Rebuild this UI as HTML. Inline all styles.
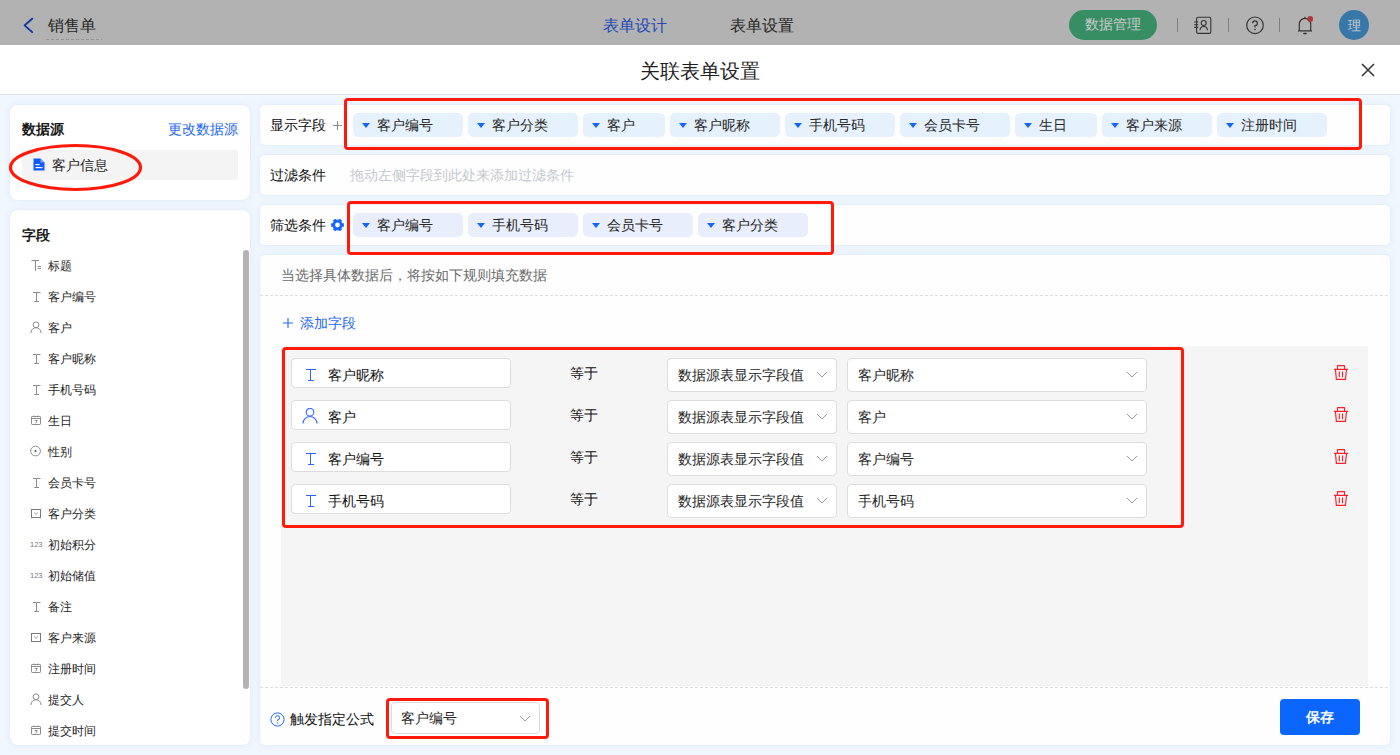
<!DOCTYPE html>
<html><head><meta charset="utf-8">
<style>
*{box-sizing:border-box;margin:0;padding:0}
html,body{width:1400px;height:755px;overflow:hidden}
body{position:relative;background:#f1f7fe;font-family:"Liberation Sans",sans-serif;font-size:14px;color:#262626}
.a{position:absolute}
.t{position:absolute;white-space:nowrap;line-height:20px}
#hdr{left:0;top:0;width:1400px;height:45px;background:#fff}
#ov{left:0;top:0;width:1400px;height:45px;background:rgba(0,0,0,.3)}
#mh{left:0;top:45px;width:1400px;height:50px;background:#fff;border-bottom:1px solid #e3e3e3}
.card{position:absolute;background:#fff;border-radius:8px;box-shadow:0 0 6px rgba(205,225,250,.7)}
.rc{position:absolute;background:#fefefe;border-radius:5px;box-shadow:0 0 6px rgba(205,225,250,.7)}
.tag{position:absolute;top:8px;height:24px;background:#e5f2fd;border-radius:5px}
.tag i{position:absolute;left:9px;top:10px;width:0;height:0;border-left:4.5px solid transparent;border-right:4.5px solid transparent;border-top:5px solid #1366ff}
.tag span{position:absolute;left:24px;top:2px;line-height:20px;color:#262626;white-space:nowrap}
.ftag{background:#e8eefb}
.red{position:absolute;border:3px solid #ff1a0a;border-radius:4px}
.fi{position:absolute;left:22px;width:200px;height:20px}
.fi svg{position:absolute;left:8px;top:3px}
.fi span{position:absolute;left:26px;top:0;font-size:12px;line-height:20px;color:#262626}
.inp{position:absolute;left:10px;width:220px;height:30px;background:#fff;border:1px solid #dcdcdc;border-radius:4px}
.sel{position:absolute;height:34px;background:#fff;border:1px solid #dcdcdc;border-radius:4px}
</style></head><body>

<!-- top header -->
<div id="hdr" class="a">
  <svg class="a" style="left:21px;top:16px" width="14" height="18" viewBox="0 0 14 18"><path d="M11.2 2.7 L3.6 9.4 L11.2 16.1" fill="none" stroke="#1450f0" stroke-width="1.9" stroke-linecap="round" stroke-linejoin="round"/></svg>
  <div class="t" style="left:48px;top:15px;font-size:16px;line-height:22px;color:#363636">销售单</div>
  <div class="a" style="left:46px;top:39px;width:56px;height:1px;background:repeating-linear-gradient(90deg,#d5d5d5 0 3px,transparent 3px 5px)"></div>
  <div class="t" style="left:603px;top:15px;font-size:16px;line-height:22px;color:#2f6bff">表单设计</div>
  <div class="t" style="left:730px;top:15px;font-size:16px;line-height:22px;color:#363636">表单设置</div>
  <div class="a" style="left:1069px;top:10px;width:88px;height:30px;border-radius:15px;background:#4fcc8d"></div>
  
  <div class="a" style="left:1177px;top:18px;width:1px;height:14px;background:#b5b5b5"></div>
  <svg class="a" style="left:1193px;top:16px" width="19" height="19" viewBox="0 0 19 19"><rect x="3.6" y="1.2" width="14.2" height="16.2" rx="1.3" fill="none" stroke="#4a4a4a" stroke-width="1.1"/><path d="M1.2 6H5.2M1.2 8.7H5.2M1.2 11.4H5.2" stroke="#4a4a4a" stroke-width="1.1"/><circle cx="10.7" cy="7" r="2.5" fill="none" stroke="#4a4a4a" stroke-width="1.1"/><path d="M6.9 14.3 A3.9 4.6 0 0 1 14.6 14.3" fill="none" stroke="#4a4a4a" stroke-width="1.1"/></svg>
  <div class="a" style="left:1228px;top:18px;width:1px;height:14px;background:#b5b5b5"></div>
  <svg class="a" style="left:1245px;top:16px" width="20" height="19" viewBox="0 0 20 19"><circle cx="10" cy="9.3" r="8.3" fill="none" stroke="#4a4a4a" stroke-width="1.15"/><path d="M7.6 7.2 A2.4 2.4 0 1 1 10 9.6 V11.4" fill="none" stroke="#4a4a4a" stroke-width="1.15"/><circle cx="10" cy="13.6" r="0.8" fill="#4a4a4a"/></svg>
  <div class="a" style="left:1279px;top:18px;width:1px;height:14px;background:#b5b5b5"></div>
  <svg class="a" style="left:1296px;top:15px" width="20" height="21" viewBox="0 0 20 21"><path d="M2 15.9 H16 M3.3 15.9 V9 A5.7 5.7 0 0 1 14.7 9 V15.9" fill="none" stroke="#4a4a4a" stroke-width="1.15"/><path d="M7.8 18.5 H10.2" stroke="#4a4a4a" stroke-width="1.3" stroke-linecap="round"/><path d="M9 1.8 V3.2" stroke="#4a4a4a" stroke-width="1.2"/><circle cx="14.1" cy="4" r="3" fill="#f55454"/></svg>
  <div class="a" style="left:1339px;top:10px;width:30px;height:30px;border-radius:50%;background:#50acf2"></div>
</div>
<div id="ov" class="a"></div>
<div class="t" style="left:1085px;top:14px;color:#cbcbcb">数据管理</div>
<div class="t" style="left:1348px;top:16px;font-size:13px;color:#d0d0d0">理</div>


<!-- modal header -->
<div id="mh" class="a">
  <div class="t" style="left:640px;top:13px;font-size:20px;line-height:26px;color:#1f1f1f">关联表单设置</div>
  <svg class="a" style="left:1361px;top:18px" width="14" height="14" viewBox="0 0 14 14"><path d="M1 1L13 13M13 1L1 13" stroke="#333" stroke-width="1.5"/></svg>
</div>

<!-- left card 1 -->
<div class="card" style="left:10px;top:105px;width:240px;height:95px"></div>
<!-- left card 2 -->
<div class="card" style="left:10px;top:210px;width:240px;height:535px"></div>

<!-- right cards -->
<div class="rc" style="left:260px;top:105px;width:1130px;height:40px"></div>
<div class="rc" style="left:260px;top:155px;width:1130px;height:40px"></div>
<div class="rc" style="left:260px;top:205px;width:1130px;height:40px"></div>
<div class="rc" style="left:260px;top:255px;width:1130px;height:490px"></div>


<div class="t" style="left:22px;top:119px;font-weight:bold;color:#1a1a1a">数据源</div>
<div class="t" style="left:168px;top:119px;color:#2468f2">更改数据源</div>
<div class="a" style="left:22px;top:150px;width:216px;height:30px;background:#f4f4f4;border-radius:2px"></div>
<svg class="a" style="left:33px;top:158px" width="12" height="13" viewBox="0 0 12 13"><path d="M0.5 0.5 H7.5 L11.5 4.5 V12.5 H0.5 Z" fill="#0f5bff"/><path d="M7.5 0.5 V4.5 H11.5" fill="#7aa6ff"/><rect x="2.5" y="6" width="4" height="1.2" fill="#fff"/><rect x="2.5" y="9" width="7" height="1.2" fill="#fff"/></svg>
<div class="t" style="left:52px;top:155px;color:#262626">客户信息</div>
<svg class="a" style="left:8px;top:143px" width="136" height="50" viewBox="0 0 136 50"><ellipse cx="67.5" cy="24.5" rx="65" ry="22" fill="none" stroke="#ff1a0a" stroke-width="3.2"/></svg>
<div class="t" style="left:22px;top:225px;font-weight:bold;color:#1a1a1a">字段</div>
<div class="a" style="left:243px;top:250px;width:6px;height:439px;background:#b4b4b4;border-radius:3px"></div>
<div class="fi" style="top:255.5px"><svg style="position:absolute;left:8px;top:3.5px" width="12" height="13" viewBox="0 0 12 13"><path d="M1.5 1.5H9M5.5 1.5V12M7.5 7.5H11M7.5 9.5H11" stroke="#8c8c8c" stroke-width="1" fill="none"/></svg><span>标题</span></div>
<div class="fi" style="top:286.5px"><svg style="position:absolute;left:8px;top:3.5px" width="12" height="13" viewBox="0 0 12 13"><path d="M3 2.5H10.5M6.5 2.5V11.5M4.2 11.5H9" stroke="#8c8c8c" stroke-width="1" fill="none"/></svg><span>客户编号</span></div>
<div class="fi" style="top:317.5px"><svg style="position:absolute;left:8px;top:3.5px" width="12" height="13" viewBox="0 0 12 13"><circle cx="6" cy="3.8" r="2.9" stroke="#8c8c8c" stroke-width="1" fill="none"/><path d="M0.9 12 A5.1 5.3 0 0 1 11.1 12" stroke="#8c8c8c" stroke-width="1" fill="none"/></svg><span>客户</span></div>
<div class="fi" style="top:348.5px"><svg style="position:absolute;left:8px;top:3.5px" width="12" height="13" viewBox="0 0 12 13"><path d="M3 2.5H10.5M6.5 2.5V11.5M4.2 11.5H9" stroke="#8c8c8c" stroke-width="1" fill="none"/></svg><span>客户昵称</span></div>
<div class="fi" style="top:379.5px"><svg style="position:absolute;left:8px;top:3.5px" width="12" height="13" viewBox="0 0 12 13"><path d="M3 2.5H10.5M6.5 2.5V11.5M4.2 11.5H9" stroke="#8c8c8c" stroke-width="1" fill="none"/></svg><span>手机号码</span></div>
<div class="fi" style="top:410.5px"><svg style="position:absolute;left:8px;top:3.5px" width="12" height="13" viewBox="0 0 12 13"><rect x="1.5" y="2.5" width="9" height="8" rx="0.7" stroke="#8c8c8c" stroke-width="1" fill="none"/><path d="M1.5 4.5H10.5M4.6 6.5H7.2L5.7 9.3M4 1.5V3M8 1.5V3" stroke="#8c8c8c" stroke-width="1" fill="none"/></svg><span>生日</span></div>
<div class="fi" style="top:441.5px"><svg style="position:absolute;left:8px;top:3.5px" width="12" height="13" viewBox="0 0 12 13"><circle cx="5.5" cy="6" r="4.9" stroke="#8c8c8c" stroke-width="1" fill="none"/><circle cx="5.5" cy="6" r="1.1" fill="#555"/></svg><span>性别</span></div>
<div class="fi" style="top:472.5px"><svg style="position:absolute;left:8px;top:3.5px" width="12" height="13" viewBox="0 0 12 13"><path d="M3 2.5H10.5M6.5 2.5V11.5M4.2 11.5H9" stroke="#8c8c8c" stroke-width="1" fill="none"/></svg><span>会员卡号</span></div>
<div class="fi" style="top:503.5px"><svg style="position:absolute;left:8px;top:3.5px" width="12" height="13" viewBox="0 0 12 13"><rect x="1.5" y="2.5" width="9" height="8" stroke="#7a7a7a" stroke-width="1" fill="none"/><path d="M4.2 5.6 L6 7.3 L7.8 5.6" stroke="#8c8c8c" stroke-width="0.9" fill="none"/></svg><span>客户分类</span></div>
<div class="fi" style="top:534.5px"><svg style="position:absolute;left:8px;top:3.5px" width="14" height="13" viewBox="0 0 14 13"><text x="0" y="9" font-size="7.5" fill="#777" font-family="Liberation Sans">123</text></svg><span>初始积分</span></div>
<div class="fi" style="top:565.5px"><svg style="position:absolute;left:8px;top:3.5px" width="14" height="13" viewBox="0 0 14 13"><text x="0" y="9" font-size="7.5" fill="#777" font-family="Liberation Sans">123</text></svg><span>初始储值</span></div>
<div class="fi" style="top:596.5px"><svg style="position:absolute;left:8px;top:3.5px" width="12" height="13" viewBox="0 0 12 13"><path d="M3 2.5H10.5M6.5 2.5V11.5M4.2 11.5H9" stroke="#8c8c8c" stroke-width="1" fill="none"/></svg><span>备注</span></div>
<div class="fi" style="top:627.5px"><svg style="position:absolute;left:8px;top:3.5px" width="12" height="13" viewBox="0 0 12 13"><rect x="1.5" y="2.5" width="9" height="8" stroke="#7a7a7a" stroke-width="1" fill="none"/><path d="M4.2 5.6 L6 7.3 L7.8 5.6" stroke="#8c8c8c" stroke-width="0.9" fill="none"/></svg><span>客户来源</span></div>
<div class="fi" style="top:658.5px"><svg style="position:absolute;left:8px;top:3.5px" width="12" height="13" viewBox="0 0 12 13"><rect x="1.5" y="2.5" width="9" height="8" rx="0.7" stroke="#8c8c8c" stroke-width="1" fill="none"/><path d="M1.5 4.5H10.5M4.6 6.5H7.2L5.7 9.3M4 1.5V3M8 1.5V3" stroke="#8c8c8c" stroke-width="1" fill="none"/></svg><span>注册时间</span></div>
<div class="fi" style="top:689.5px"><svg style="position:absolute;left:8px;top:3.5px" width="12" height="13" viewBox="0 0 12 13"><circle cx="6" cy="3.8" r="2.9" stroke="#8c8c8c" stroke-width="1" fill="none"/><path d="M0.9 12 A5.1 5.3 0 0 1 11.1 12" stroke="#8c8c8c" stroke-width="1" fill="none"/></svg><span>提交人</span></div>
<div class="fi" style="top:720.5px"><svg style="position:absolute;left:8px;top:3.5px" width="12" height="13" viewBox="0 0 12 13"><rect x="1.5" y="2.5" width="9" height="8" rx="0.7" stroke="#8c8c8c" stroke-width="1" fill="none"/><path d="M1.5 4.5H10.5M4.6 6.5H7.2L5.7 9.3M4 1.5V3M8 1.5V3" stroke="#8c8c8c" stroke-width="1" fill="none"/></svg><span>提交时间</span></div>

<div class="t" style="left:270px;top:115px;color:#0d0d0d">显示字段</div>
<svg class="a" style="left:333px;top:121px" width="9" height="9" viewBox="0 0 9 9"><path d="M4.5 0V9M0 4.5H9" stroke="#8a8a8a" stroke-width="1"/></svg>
<div class="tag" style="left:353px;top:113px;width:110px"><i></i><span>客户编号</span></div>
<div class="tag" style="left:468px;top:113px;width:110px"><i></i><span>客户分类</span></div>
<div class="tag" style="left:583px;top:113px;width:82px"><i></i><span>客户</span></div>
<div class="tag" style="left:670px;top:113px;width:110px"><i></i><span>客户昵称</span></div>
<div class="tag" style="left:785px;top:113px;width:110px"><i></i><span>手机号码</span></div>
<div class="tag" style="left:900px;top:113px;width:110px"><i></i><span>会员卡号</span></div>
<div class="tag" style="left:1015px;top:113px;width:82px"><i></i><span>生日</span></div>
<div class="tag" style="left:1102px;top:113px;width:110px"><i></i><span>客户来源</span></div>
<div class="tag" style="left:1217px;top:113px;width:110px"><i></i><span>注册时间</span></div>
<div class="red" style="left:344px;top:98px;width:1018px;height:52px"></div>
<div class="t" style="left:270px;top:165px;color:#0d0d0d">过滤条件</div>
<div class="t" style="left:350px;top:165px;color:#c4c8cf">拖动左侧字段到此处来添加过滤条件</div>
<div class="t" style="left:270px;top:215px;color:#0d0d0d">筛选条件</div>
<svg class="a" style="left:331px;top:219px" width="13" height="12" viewBox="0 0 13 12"><path d="M10.74 3.55 L11.19 4.57 L12.64 4.58 L12.64 7.42 L11.19 7.43 L10.74 8.45 L10.08 9.34 L10.80 10.61 L8.34 12.02 L7.60 10.77 L6.50 10.90 L5.40 10.77 L4.66 12.02 L2.20 10.61 L2.92 9.34 L2.26 8.45 L1.81 7.43 L0.36 7.42 L0.36 4.58 L1.81 4.57 L2.26 3.55 L2.92 2.66 L2.20 1.39 L4.66 -0.02 L5.40 1.23 L6.50 1.10 L7.60 1.23 L8.34 -0.02 L10.80 1.39 L10.08 2.66Z" fill="#1366ff" stroke="#1366ff" stroke-width="0.6" stroke-linejoin="round"/><circle cx="6.5" cy="6" r="2.4" fill="#fff"/></svg>
<div class="tag ftag" style="left:353px;top:213px;width:110px"><i></i><span>客户编号</span></div>
<div class="tag ftag" style="left:468px;top:213px;width:110px"><i></i><span>手机号码</span></div>
<div class="tag ftag" style="left:583px;top:213px;width:110px"><i></i><span>会员卡号</span></div>
<div class="tag ftag" style="left:698px;top:213px;width:110px"><i></i><span>客户分类</span></div>
<div class="red" style="left:347px;top:201px;width:487px;height:54px"></div>
<div class="t" style="left:281px;top:265px;color:#6b6b6b">当选择具体数据后，将按如下规则填充数据</div>
<div class="a" style="left:260px;top:295px;width:1130px;height:1px;background:repeating-linear-gradient(90deg,#dcdcdc 0 3px,transparent 3px 5px)"></div>
<svg class="a" style="left:282px;top:317px" width="12" height="12" viewBox="0 0 12 12"><path d="M6 1V11M1 6H11" stroke="#2468f2" stroke-width="1.1"/></svg>
<div class="t" style="left:300px;top:313px;color:#2468f2">添加字段</div>
<div class="a" style="left:281px;top:346px;width:1087px;height:340px;background:#f5f5f5"></div>
<div class="inp" style="left:291px;top:358px;width:220px"></div>
<svg class="a" style="left:305px;top:369px" width="12" height="13" viewBox="0 0 12 13"><path d="M1 0.5H11M5.5 0.5V11.5M3 11.5H9" stroke="#2f62ff" stroke-width="1" fill="none"/></svg>
<div class="t" style="left:328px;top:365px;color:#111">客户昵称</div>
<div class="t" style="left:570px;top:363px;color:#0d0d0d">等于</div>
<div class="sel" style="left:667px;top:358px;width:170px"></div>
<div class="t" style="left:678px;top:365px;color:#262626">数据源表显示字段值</div>
<svg class="a" style="left:816px;top:371px" width="12" height="7" viewBox="0 0 12 7"><path d="M1 1L6 6L11 1" stroke="#999" stroke-width="1" fill="none"/></svg>
<div class="sel" style="left:847px;top:358px;width:300px"></div>
<div class="t" style="left:858px;top:365px;color:#262626">客户昵称</div>
<svg class="a" style="left:1126px;top:371px" width="12" height="7" viewBox="0 0 12 7"><path d="M1 1L6 6L11 1" stroke="#999" stroke-width="1" fill="none"/></svg>
<svg class="a" style="left:1333px;top:364px" width="16" height="16" viewBox="0 0 16 16"><path d="M4.5 5.3V1.6H11.5V5.3M1 5.3H15M2.4 5.3L3.4 15.4H12.4L13.6 5.3M6.3 7.6V13.2M9.5 7.6V13.2" stroke="#f5222d" stroke-width="1.15" fill="none" stroke-linejoin="round"/></svg>
<div class="inp" style="left:291px;top:400px;width:220px"></div>
<svg class="a" style="left:302px;top:408px" width="16" height="16" viewBox="0 0 16 16"><circle cx="8" cy="4.2" r="3.8" stroke="#3d6bff" stroke-width="1.2" fill="none"/><path d="M1 15.5 A7 7 0 0 1 15 15.5" stroke="#3d6bff" stroke-width="1.2" fill="none"/></svg>
<div class="t" style="left:328px;top:407px;color:#111">客户</div>
<div class="t" style="left:570px;top:405px;color:#0d0d0d">等于</div>
<div class="sel" style="left:667px;top:400px;width:170px"></div>
<div class="t" style="left:678px;top:407px;color:#262626">数据源表显示字段值</div>
<svg class="a" style="left:816px;top:413px" width="12" height="7" viewBox="0 0 12 7"><path d="M1 1L6 6L11 1" stroke="#999" stroke-width="1" fill="none"/></svg>
<div class="sel" style="left:847px;top:400px;width:300px"></div>
<div class="t" style="left:858px;top:407px;color:#262626">客户</div>
<svg class="a" style="left:1126px;top:413px" width="12" height="7" viewBox="0 0 12 7"><path d="M1 1L6 6L11 1" stroke="#999" stroke-width="1" fill="none"/></svg>
<svg class="a" style="left:1333px;top:406px" width="16" height="16" viewBox="0 0 16 16"><path d="M4.5 5.3V1.6H11.5V5.3M1 5.3H15M2.4 5.3L3.4 15.4H12.4L13.6 5.3M6.3 7.6V13.2M9.5 7.6V13.2" stroke="#f5222d" stroke-width="1.15" fill="none" stroke-linejoin="round"/></svg>
<div class="inp" style="left:291px;top:442px;width:220px"></div>
<svg class="a" style="left:305px;top:453px" width="12" height="13" viewBox="0 0 12 13"><path d="M1 0.5H11M5.5 0.5V11.5M3 11.5H9" stroke="#2f62ff" stroke-width="1" fill="none"/></svg>
<div class="t" style="left:328px;top:449px;color:#111">客户编号</div>
<div class="t" style="left:570px;top:447px;color:#0d0d0d">等于</div>
<div class="sel" style="left:667px;top:442px;width:170px"></div>
<div class="t" style="left:678px;top:449px;color:#262626">数据源表显示字段值</div>
<svg class="a" style="left:816px;top:455px" width="12" height="7" viewBox="0 0 12 7"><path d="M1 1L6 6L11 1" stroke="#999" stroke-width="1" fill="none"/></svg>
<div class="sel" style="left:847px;top:442px;width:300px"></div>
<div class="t" style="left:858px;top:449px;color:#262626">客户编号</div>
<svg class="a" style="left:1126px;top:455px" width="12" height="7" viewBox="0 0 12 7"><path d="M1 1L6 6L11 1" stroke="#999" stroke-width="1" fill="none"/></svg>
<svg class="a" style="left:1333px;top:448px" width="16" height="16" viewBox="0 0 16 16"><path d="M4.5 5.3V1.6H11.5V5.3M1 5.3H15M2.4 5.3L3.4 15.4H12.4L13.6 5.3M6.3 7.6V13.2M9.5 7.6V13.2" stroke="#f5222d" stroke-width="1.15" fill="none" stroke-linejoin="round"/></svg>
<div class="inp" style="left:291px;top:484px;width:220px"></div>
<svg class="a" style="left:305px;top:495px" width="12" height="13" viewBox="0 0 12 13"><path d="M1 0.5H11M5.5 0.5V11.5M3 11.5H9" stroke="#2f62ff" stroke-width="1" fill="none"/></svg>
<div class="t" style="left:328px;top:491px;color:#111">手机号码</div>
<div class="t" style="left:570px;top:489px;color:#0d0d0d">等于</div>
<div class="sel" style="left:667px;top:484px;width:170px"></div>
<div class="t" style="left:678px;top:491px;color:#262626">数据源表显示字段值</div>
<svg class="a" style="left:816px;top:497px" width="12" height="7" viewBox="0 0 12 7"><path d="M1 1L6 6L11 1" stroke="#999" stroke-width="1" fill="none"/></svg>
<div class="sel" style="left:847px;top:484px;width:300px"></div>
<div class="t" style="left:858px;top:491px;color:#262626">手机号码</div>
<svg class="a" style="left:1126px;top:497px" width="12" height="7" viewBox="0 0 12 7"><path d="M1 1L6 6L11 1" stroke="#999" stroke-width="1" fill="none"/></svg>
<svg class="a" style="left:1333px;top:490px" width="16" height="16" viewBox="0 0 16 16"><path d="M4.5 5.3V1.6H11.5V5.3M1 5.3H15M2.4 5.3L3.4 15.4H12.4L13.6 5.3M6.3 7.6V13.2M9.5 7.6V13.2" stroke="#f5222d" stroke-width="1.15" fill="none" stroke-linejoin="round"/></svg>
<div class="red" style="left:282px;top:347px;width:902px;height:181px"></div>
<div class="a" style="left:260px;top:687px;width:1130px;height:1px;background:repeating-linear-gradient(90deg,#dcdcdc 0 3px,transparent 3px 5px)"></div>
<svg class="a" style="left:270px;top:712px" width="15" height="15" viewBox="0 0 15 15"><circle cx="7.5" cy="7.5" r="6.6" stroke="#2468f2" stroke-width="1" fill="none"/><path d="M5.4 5.8 A2.1 2.1 0 1 1 7.5 7.9 V9" stroke="#2468f2" stroke-width="1" fill="none"/><circle cx="7.5" cy="10.9" r="0.7" fill="#2468f2"/></svg>
<div class="t" style="left:290px;top:709px;color:#0d0d0d">触发指定公式</div>
<div class="sel" style="left:391px;top:702px;width:149px;height:32px"></div>
<div class="t" style="left:401px;top:708px;color:#262626">客户编号</div>
<svg class="a" style="left:519px;top:715px" width="12" height="7" viewBox="0 0 12 7"><path d="M1 1L6 6L11 1" stroke="#999" stroke-width="1" fill="none"/></svg>
<div class="red" style="left:386px;top:698px;width:163px;height:41px"></div>
<div class="a" style="left:1280px;top:699px;width:80px;height:36px;background:#0a66ff;border-radius:4px"></div>
<div class="t" style="left:1306px;top:707px;color:#fff;font-weight:bold">保存</div>

</body></html>
